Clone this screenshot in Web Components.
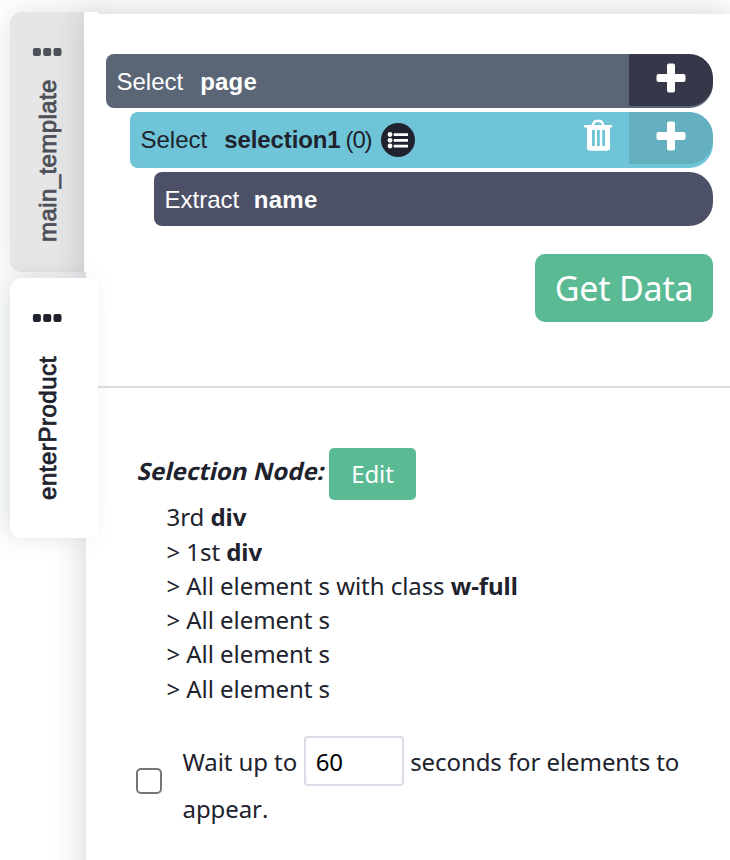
<!DOCTYPE html>
<html lang="en"><head><meta charset="utf-8"><title>Template editor</title>
<style>
body{margin:0;background:#fff;overflow:hidden}
</style></head><body>
<editor-shell>
  <side-tab slot="tabs" style="--ls:.42px">main_template</side-tab>
  <side-tab slot="tabs" active style="--ls:.54px">enterProduct</side-tab>
  <command-row kind="page" adds><span>Select</span><b slot="name">page</b></command-row>
  <command-row kind="selection" adds removable><span>Select</span><b slot="name">selection1</b><span slot="count">(0)</span></command-row>
  <command-row kind="extract"><span>Extract</span><b slot="name">name</b></command-row>
  <action-button slot="run" large>Get Data</action-button>
  <selection-node slot="options"></selection-node>
  <wait-option slot="options"></wait-option>
</editor-shell>
<script>
const define=(name,html)=>customElements.define(name,class extends HTMLElement{
  constructor(){super();const t=document.createElement('template');t.innerHTML=html;
    this.attachShadow({mode:'open'}).append(t.content.cloneNode(true));}
});

define('editor-shell',`<style>
:host{display:grid;grid-template-columns:86px 1fr;width:730px;height:860px;overflow:hidden;font-family:"Noto Sans",sans-serif;color:#20222d}
nav{display:flex;flex-direction:column;gap:6px;padding:12px 0 0 10px}
main{margin-top:14px;height:900px;background:#fff;box-shadow:0 0 32px rgba(32,38,60,.21);position:relative;z-index:1}
.commands{display:flex;flex-direction:column;gap:4px;padding:40px 17px 0 20px}
.run{display:flex;justify-content:flex-end;padding:28px 17px 0 0}
hr{border:0;height:2px;background:#ddd;margin:64px 0 0}
.options{padding:60px 0 0 50px}
</style><nav><slot name="tabs"></slot></nav>
<main><div class="commands"><slot></slot></div><div class="run"><slot name="run"></slot></div><hr><div class="options"><slot name="options"></slot></div></main>`);

define('side-tab',`<style>
:host{display:flex;width:88px;height:260px;box-sizing:border-box;flex:none;background:#e6e6e6;border-radius:12px 0 0 12px;box-shadow:0 0 30px rgba(32,60,70,.14);color:#4d5058}
:host([active]){background:#fff;color:#20222d;position:relative;z-index:2;box-shadow:-8px 0 26px -4px rgba(32,60,70,.17)}
.body{width:74px;display:flex;flex-direction:column;align-items:center}
.edge{width:14px;background:#fff;position:relative;z-index:2}
svg{display:block;margin-top:36px;width:30px;height:8px;fill:currentColor}
.label{writing-mode:vertical-rl;transform:rotate(180deg);font:24px/30px "Liberation Sans",sans-serif;letter-spacing:var(--ls);-webkit-text-stroke:.8px currentColor;white-space:nowrap;height:163px;margin-top:23px;margin-left:2px}
:host([active]) .label{height:144px;margin-top:34px}
</style><div class="body"><svg viewBox="0 0 30 8"><rect x=".9" width="8" height="8" rx="2"/><rect x="11.2" width="8" height="8" rx="2"/><rect x="21.500" width="8" height="8" rx="2"/></svg><div class="label"><slot></slot></div></div><div class="edge"></div>`);

define('command-row',`<style>
:host{display:flex;height:54px;border-radius:8px 24px 24px 8px;overflow:hidden;background:#5a6675;color:#fff;font:24px/56px "Liberation Sans",sans-serif}
:host([kind=selection]){height:56px;margin-left:24px;background:#6fc5d7;color:#20222d}
:host([kind=extract]){margin-left:48px;background:#4d5167}
.text{flex:1;display:flex;padding-left:10.500px;white-space:pre}
.name{margin-left:17px}
:host([kind=page]) .name{letter-spacing:.2px}
:host([kind=selection]) .name{letter-spacing:-.1px}
:host([kind=extract]) .name{margin-left:14.500px;letter-spacing:.3px}
.count{margin-left:5px;letter-spacing:-1.2px}
.list,.trash,.add{display:none}
:host([kind=selection]) .list{display:block;margin:11px 0 0 10px}
:host([removable]) .trash{display:block;margin:7px 16px 0 0}
:host([adds]) .add{display:flex;justify-content:center;width:84px;height:52px;background:#363849;border-radius:0 24px 24px 0}
:host([kind=selection]) .add{background:#65b0c0}
.add svg{margin-top:9px}
</style><div class="text"><slot></slot><span class="name"><slot name="name"></slot></span><span class="count"><slot name="count"></slot></span>
<svg class="list" width="34" height="34" viewBox="0 0 34 34"><circle cx="17" cy="17" r="17" fill="#20222d"/><g fill="#fff"><circle cx="9" cy="11.500" r="2.400"/><circle cx="9" cy="17.300" r="2.400"/><circle cx="9" cy="23" r="2.400"/><path d="M12.700 10.300H27v2.700H12.700zM12.700 16H27v2.700H12.700zM12.700 21.800H27v2.700H12.700z"/></g></svg></div>
<svg class="trash" width="30" height="32" viewBox="0 0 30 32"><path d="M2 7.200h26M9.500 7q1-4.500 3.500-5h4q2.500.5 3.500 5" fill="none" stroke="#fff" stroke-width="2.400" stroke-linecap="round"/><path fill="#fff" fill-rule="evenodd" d="M4 7h23v21.500q0 3.200-3.200 3.200H7.200Q4 31.700 4 28.500zM9 11v16h2.800V11zM14 11v16h2.800V11zM19.200 11v16H22V11z"/></svg>
<div class="add"><svg width="30" height="30" viewBox="0 0 30 30" fill="#fff"><rect x="11" y=".5" width="8" height="29" rx="2"/><rect x=".5" y="11" width="29" height="8" rx="2"/></svg></div>`);

define('action-button',`<style>
:host{display:inline-flex;justify-content:center;align-items:center;box-sizing:border-box;width:87px;height:52px;padding-bottom:2px;border-radius:5px;background:#5aba94;color:#fff;font:24px "Noto Sans",sans-serif}
:host([large]){width:178px;height:68px;border-radius:10px;font-size:34px;letter-spacing:-.2px;padding-bottom:1px}
</style><slot></slot>`);

define('selection-node',`<style>
:host{display:block;font:24px/34.250px "Noto Sans",sans-serif;letter-spacing:-.06px}
header{display:flex;gap:4px;height:52px;line-height:46px}
header span{box-sizing:border-box;padding-left:2px;font-weight:700;white-space:nowrap;width:189px;transform:skewX(-13deg);letter-spacing:0}
ul{list-style:none;margin:0;padding:.4px 0 0 30.500px}
</style><header><span>Selection Node:</span><action-button>Edit</action-button></header>
<ul><li>3rd <b>div</b></li><li>&gt; 1st <b>div</b></li><li>&gt; All element s with class <b>w-full</b></li><li>&gt; All element s</li><li>&gt; All element s</li><li>&gt; All element s</li></ul>`);

define('wait-option',`<style>
:host{display:flex;align-items:flex-start;margin-top:30.300px;font:24px/47px "Noto Sans",sans-serif;letter-spacing:-.08px}
input{box-sizing:border-box;margin:0;font:24px "Noto Sans",sans-serif;color:#000;letter-spacing:-.1px}
.check{appearance:none;width:26px;height:26px;border:2px solid #767676;border-radius:5px;margin:32px 20.500px 0 0;flex:none}
.line{display:flex;height:50px;line-height:52px}
.seconds{width:100px;height:50px;border:2px solid #dcdbe5;border-radius:4px;padding:2px 9.500px;margin:0 6px 0 7px}
.last{line-height:46px;font-kerning:none}
</style><input class="check" type="checkbox" aria-label="Wait for elements"><div><div class="line"><span>Wait up to</span><input class="seconds" value="60" aria-label="Seconds"><span>seconds for elements to</span></div><div class="last">appear.</div></div>`);
</script></body></html>
